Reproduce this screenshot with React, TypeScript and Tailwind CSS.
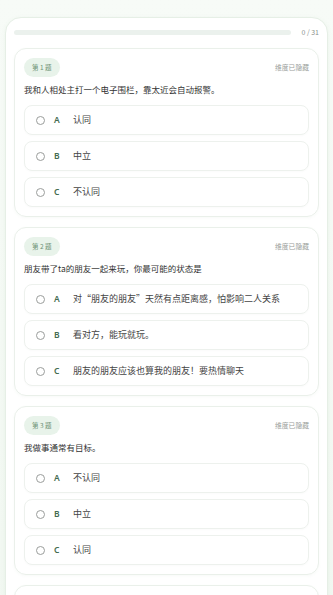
import React from "react";

type Q = { n: number; text: string; options: string[] };

const questions: Q[] = [
  { n: 1, text: "我和人相处主打一个电子围栏，靠太近会自动报警。", options: ["认同", "中立", "不认同"] },
  { n: 2, text: "朋友带了ta的朋友一起来玩，你最可能的状态是", options: ["对“朋友的朋友”天然有点距离感，怕影响二人关系", "看对方，能玩就玩。", "朋友的朋友应该也算我的朋友！要热情聊天"] },
  { n: 3, text: "我做事通常有目标。", options: ["不认同", "中立", "认同"] },
  { n: 4, text: "我喜欢提前规划好每一天的安排。", options: ["认同", "中立", "不认同"] },
];

const letters = ["A", "B", "C"];
const font = { fontFamily: '"Noto Sans CJK SC", "Noto Sans", sans-serif' };

export default function App() {
  return (
    <div className="min-h-screen bg-gradient-to-b from-[#f7fbf7] to-[#f0f7f0] pt-[17px] px-[5px]" style={font}>
      <div className="rounded-[16px] bg-white border border-[#e6efe6] px-[8px] pt-[12px] pb-[9px] shadow-[0_1px_4px_rgba(120,160,120,0.08)]">
        <div className="flex items-center gap-[9px] h-[5px]">
          <div className="flex-1 h-[5px] rounded-full bg-[#ebf1ed]" />
          <div className="text-[7px] leading-[5px] text-[#8a918c] w-[19px] text-right">0 / 31</div>
        </div>
        <div className="mt-[13px] flex flex-col gap-[10px]">
          {questions.map((q) => (
            <div key={q.n} className="rounded-[12px] border border-[#eaf0ea] px-[9px] pt-[9px] pb-[9px] shadow-[0_1px_3px_rgba(120,160,120,0.05)]">
              <div className="flex items-center justify-between">
                <div className="h-[19px] px-[8px] rounded-full bg-[#e8f3ea] flex items-center text-[6.5px] text-[#6c9174]">
                  第 {q.n} 题
                </div>
                <div className="text-[6.8px] text-[#9aa09b]">维度已隐藏</div>
              </div>
              <div className="mt-[6px] text-[8.5px] leading-[12px] text-[#333]">{q.text}</div>
              <div className="mt-[10px] flex flex-col gap-[6px]">
                {q.options.map((o, i) => (
                  <div key={i} className="h-[30px] rounded-[8px] border border-[#edf1ed] flex items-center pl-[11px] shadow-[0_1px_2px_rgba(0,0,0,0.02)]">
                    <div className="w-[9px] h-[9px] rounded-full border border-[#9a9d9b] shrink-0" />
                    <div className="ml-[9px] w-[19px] text-[8.5px] font-semibold text-[#456b50]" style={{ fontFamily: '"Noto Sans", sans-serif' }}>
                      {letters[i]}
                    </div>
                    <div className="text-[9px] text-[#444]">{o}</div>
                  </div>
                ))}
              </div>
            </div>
          ))}
        </div>
      </div>
    </div>
  );
}
